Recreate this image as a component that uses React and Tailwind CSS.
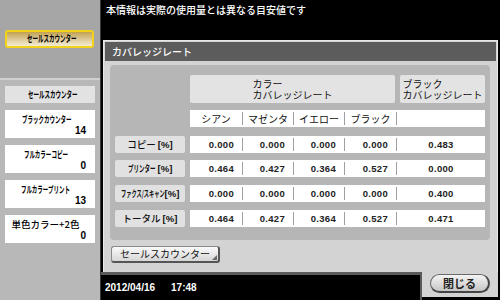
import React from "react";

const jp = "font-['Noto_Sans_CJK_JP','Noto_Sans_CJK_SC',sans-serif]";
const ar = "font-['Liberation_Sans',Arial,sans-serif]";

function Narrow({ w, className = "", children }) {
  return (
    <span className={`inline-flex items-center whitespace-nowrap leading-none ${w} ${className}`}>
      <span className="block origin-left scale-x-[0.58] whitespace-nowrap">{children}</span>
    </span>
  );
}

const cards = [
  { t: <Narrow w="w-[48px]" className="text-[9.5px] font-bold">ブラックカウンター</Narrow>, v: "14" },
  { t: <Narrow w="w-[43px]" className="text-[9.5px] font-bold">フルカラーコピー</Narrow>, v: "0" },
  { t: <Narrow w="w-[49px]" className="text-[9.5px] font-bold">フルカラープリント</Narrow>, v: "13" },
  { t: <span className="text-[9.5px] leading-none font-medium whitespace-nowrap">単色カラー+2色</span>, v: "0" },
];

const Pct = () => <span className={`${ar} text-[9.5px] font-bold leading-none`}>[%]</span>;

const rows = [
  {
    label: (
      <>
        <span className="text-[9.5px] font-medium leading-none">コピー</span>
        <Pct />
      </>
    ),
    vals: ["0.000", "0.000", "0.000", "0.000", "0.483"],
  },
  {
    label: (
      <>
        <Narrow w="w-[28px]" className="text-[9.5px] font-bold">プリンター</Narrow>
        <Pct />
      </>
    ),
    vals: ["0.464", "0.427", "0.364", "0.527", "0.000"],
  },
  {
    label: (
      <>
        <Narrow w="w-[42px]" className="text-[9px] font-bold">ファクス/スキャン</Narrow>
        <Pct />
      </>
    ),
    vals: ["0.000", "0.000", "0.000", "0.000", "0.400"],
  },
  {
    label: (
      <>
        <span className="text-[9.5px] font-medium leading-none">トータル</span>
        <Pct />
      </>
    ),
    vals: ["0.464", "0.427", "0.364", "0.527", "0.471"],
  },
];

const Sep = () => <div className="w-px h-[13px] bg-[#a0a0a0] shrink-0" />;

function DataRow({ vals }) {
  const widths = ["w-[52px]", "w-[50px]", "w-[50px]", "w-[51px]"];
  return (
    <div className="w-[295px] h-[17px] bg-white flex items-center">
      {vals.slice(0, 4).map((v, i) => (
        <React.Fragment key={i}>
          <div className={`${widths[i]} shrink-0 text-right pr-[8px] ${ar} text-[9.5px] tracking-[0.3px] font-bold leading-[17px] text-[#222]`}>{v}</div>
          <Sep />
        </React.Fragment>
      ))}
      <div className={`flex-1 text-center ${ar} text-[9.5px] tracking-[0.3px] font-bold leading-[17px] text-[#222]`}>{vals[4]}</div>
    </div>
  );
}

export default function App() {
  return (
    <div className={`w-[500px] h-[300px] flex bg-black overflow-hidden ${jp}`}>
      {/* Sidebar */}
      <aside className="w-[100px] h-full shrink-0 flex flex-col bg-[#b8b8b8]">
        <div className="h-[80px] bg-[#a6a6a6] border-b-2 border-[#d0d0d0] pt-[30px] px-[5px]">
          <div className="h-[18px] w-[89px] rounded-[3px] border-2 border-[#f2d21a] bg-linear-to-b from-[#c2a252] to-[#f4edd4] flex items-center justify-center text-black">
            <Narrow w="w-[45px]" className="text-[9.5px] font-bold">セールスカウンター</Narrow>
          </div>
        </div>
        <div className="flex flex-col gap-[7px] px-[5px] pt-[6px]">
          <div className="h-[17px] bg-[#e2e2e2] flex items-center justify-center text-black">
            <Narrow w="w-[45px]" className="text-[9.5px] font-bold">セールスカウンター</Narrow>
          </div>
          {cards.map((c, i) => (
            <div key={i} className="h-[28px] bg-white flex flex-col pt-[4px] pr-[9px]">
              <div className="h-[11px] flex items-center justify-center text-black">{c.t}</div>
              <div className={`h-[12px] leading-[12px] text-right text-[10px] font-bold text-black ${ar}`}>{c.v}</div>
            </div>
          ))}
        </div>
      </aside>
      <div className="w-px h-full bg-[#3a3a3a] shrink-0" />

      {/* Main */}
      <main className="flex-1 flex flex-col min-w-0">
        <div className="h-[40px] pl-[5px] pt-[4px] text-white text-[10px] leading-[12px] font-medium whitespace-nowrap">
          本情報は実際の使用量とは異なる目安値です
        </div>

        <div className="h-[232px] ml-[2px] mr-[2px] bg-[#d3d3d3] border border-[#e8e8e8] border-b-0 p-px pb-0 flex flex-col">
          <div className="h-[19px] bg-[#5c5c5c] text-white text-[10px] leading-[19px] pl-[7px] font-medium">
            カバレッジレート
          </div>

          <div className="ml-[5px] mt-[4px] w-[380px] h-[175px] rounded-[4px] bg-[#b6b6b6] px-[5px] pt-[10px] flex flex-col">
            {/* header boxes */}
            <div className="flex h-[28px]">
              <div className="w-[75px] shrink-0" />
              <div className="w-[205px] h-full bg-[#e3e3e3] rounded-[2px] flex items-center justify-center">
                <div className="text-[10px] leading-[11px] text-[#111] text-left">
                  <div>カラー</div>
                  <div>カバレッジレート</div>
                </div>
              </div>
              <div className="w-[85px] ml-[5px] h-full bg-[#e3e3e3] rounded-[2px] flex items-center justify-center">
                <div className="text-[10px] leading-[11px] text-[#111] text-left whitespace-nowrap">
                  <div>ブラック</div>
                  <div>カバレッジレート</div>
                </div>
              </div>
            </div>

            {/* sub header */}
            <div className="flex mt-[7px]">
              <div className="w-[75px] shrink-0" />
              <div className="w-[295px] h-[17px] bg-white flex items-center text-[10px] text-[#111] leading-[17px]">
                <div className="w-[52px] shrink-0 text-center">シアン</div>
                <Sep />
                <div className="w-[50px] shrink-0 text-center">マゼンタ</div>
                <Sep />
                <div className="w-[50px] shrink-0 text-center">イエロー</div>
                <Sep />
                <div className="w-[51px] shrink-0 text-center">ブラック</div>
                <Sep />
                <div className="flex-1" />
              </div>
            </div>

            {rows.map((r, i) => (
              <div key={i} className={`flex ${i === 0 ? "mt-[9px]" : i === 1 ? "mt-[7px]" : "mt-[8px]"}`}>
                <div className="w-[70px] h-[17px] shrink-0 bg-[#e1e1e1] rounded-[2px] flex items-center justify-center gap-[2px] text-[#111] whitespace-nowrap">
                  {r.label}
                </div>
                <div className="w-[5px] shrink-0" />
                <DataRow vals={r.vals} />
              </div>
            ))}
          </div>

          <div className="relative ml-[6px] mt-[6px] w-[109px] h-[17px] rounded-[3px] border border-[#8a8a8a] border-r-2 border-b-2 border-r-[#555] border-b-[#555] bg-linear-to-b from-[#fafafa] to-[#d6d6d6] flex items-center justify-center text-[10px] text-[#111] leading-none">
            セールスカウンター
            <svg className="absolute right-[1px] bottom-[1px] w-[5px] h-[5px]" viewBox="0 0 5 5">
              <polygon points="5,0 5,5 0,5" fill="#6a6a6a" />
            </svg>
          </div>
        </div>

        {/* bottom */}
        <div className="h-[28px] flex">
          <div className="flex-1 border-t-[3px] border-r-2 border-[#5a5a5a] pl-[4px] pt-[7px] text-white text-[10px] font-bold leading-none whitespace-nowrap">
            <span className={ar}>2012/04/16</span>
            <span className={`${ar} ml-[16px]`}>17:48</span>
          </div>
          <div className="w-[76px] h-[25px] mr-[2px] bg-[#d3d3d3] pl-[8px] pt-[2px]">
            <div className="w-[60px] h-[19px] rounded-full border border-[#6a6a6a] border-r-2 border-b-2 border-r-[#444] border-b-[#444] bg-linear-to-b from-[#f4f4f4] to-[#c6c6c6] flex items-center justify-center text-[11px] font-bold text-[#222] leading-none">
              閉じる
            </div>
          </div>
        </div>
      </main>
    </div>
  );
}
